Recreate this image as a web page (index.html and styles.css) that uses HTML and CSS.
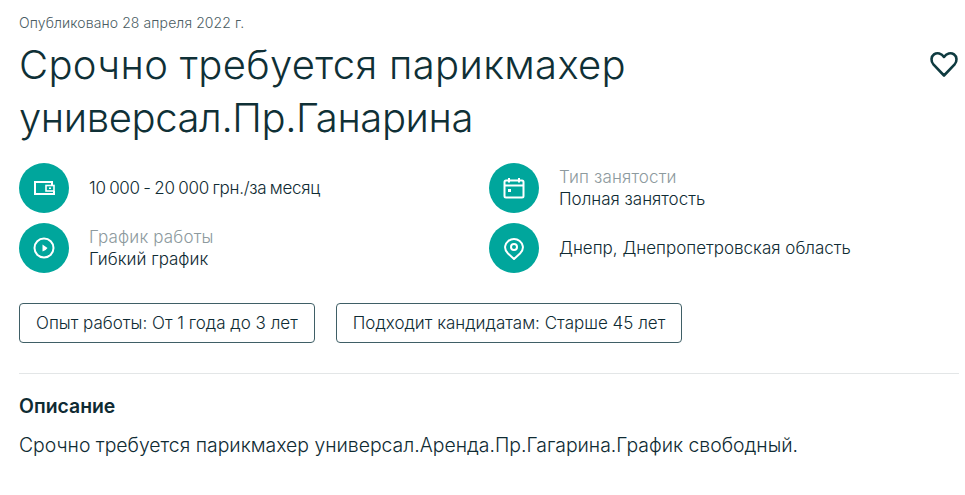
FILE: index.html
```html
<!DOCTYPE html>
<html lang="ru">
<head>
    <meta charset="UTF-8">
    <title>Срочно требуется парикмахер</title>
    <link rel="stylesheet" href="styles.css">
</head>
<body>
    <div class="vacancy">
        <div class="published">Опубликовано 28 апреля 2022 г.</div>
        <div class="title-row">
            <h1>
                <span class="title-first">Срочно требуется парикмахер</span>
                <span class="title-second">универсал.Пр.Ганарина</span>
            </h1>
            <svg class="heart" width="30" height="30" viewBox="0 0 30 30" fill="none" stroke="#0f3b40" stroke-width="2.6" stroke-linejoin="round">
                <path d="M15 26.5 L4.6 15.6 C1.5 12.2 2 7.6 5 5.4 C8.2 3.1 12.5 4.2 15 7.9 C17.5 4.2 21.8 3.1 25 5.4 C28 7.6 28.5 12.2 25.4 15.6 Z"/>
            </svg>
        </div>

        <div class="info-grid">
            <div class="info-item">
                <div class="info-icon">
                    <svg width="24" height="24" viewBox="0 0 24 24" fill="none" stroke="#fff" stroke-width="2">
                        <path d="M20 9.5 V6 H3 V18 H22 V15"/>
                        <rect x="14" y="9.5" width="8" height="5.5" stroke-width="1.6"/>
                        <path d="M17 11.5 H19 V13 H17 Z" fill="#fff" stroke="none"/>
                    </svg>
                </div>
                <div class="info-text">
                    <div class="info-value salary">10 000 - 20 000 грн./за месяц</div>
                </div>
            </div>
            <div class="info-item">
                <div class="info-icon">
                    <svg width="24" height="24" viewBox="0 0 24 24" fill="none" stroke="#fff" stroke-width="2">
                        <rect x="2.5" y="4.5" width="19" height="17" rx="1.5"/>
                        <path d="M2.5 9.5 H21.5 M7 2 V6.5 M17 2 V6.5"/>
                        <path d="M6 13 H9 V16 H6 Z" fill="#fff" stroke="none"/>
                    </svg>
                </div>
                <div class="info-text">
                    <div class="info-label">Тип занятости</div>
                    <div class="info-value">Полная занятость</div>
                </div>
            </div>
            <div class="info-item">
                <div class="info-icon">
                    <svg width="24" height="24" viewBox="0 0 24 24" fill="none" stroke="#fff" stroke-width="2">
                        <circle cx="12" cy="12" r="9.5"/>
                        <path d="M10.5 8.5 L15.5 12 Q13.5 15 10.5 15.5 Z" fill="#fff" stroke="none"/>
                    </svg>
                </div>
                <div class="info-text">
                    <div class="info-label">График работы</div>
                    <div class="info-value">Гибкий график</div>
                </div>
            </div>
            <div class="info-item">
                <div class="info-icon">
                    <svg width="24" height="24" viewBox="0 0 24 24" fill="none" stroke="#fff" stroke-width="2">
                        <path d="M12 23 L6 17.5 C3.5 15 2.8 12.5 3.2 10.2 C4 5.9 7.8 3 12 3 C16.2 3 20 5.9 20.8 10.2 C21.2 12.5 20.5 15 18 17.5 Z" stroke-linejoin="round"/>
                        <circle cx="12" cy="11" r="3"/>
                    </svg>
                </div>
                <div class="info-text">
                    <div class="info-value">Днепр, Днепропетровская область</div>
                </div>
            </div>
        </div>

        <div class="tags">
            <div class="tag">Опыт работы: От 1 года до 3 лет</div>
            <div class="tag">Подходит кандидатам: Старше 45 лет</div>
        </div>

        <div class="description">
            <h2>Описание</h2>
            <p>Срочно требуется парикмахер универсал.Аренда.Пр.Гагарина.График свободный.</p>
        </div>
    </div>
</body>
</html>
```

FILE: styles.css
```css
body {
    margin: 0;
    font-family: Inter, sans-serif;
    font-weight: 300;
    color: #0f2b33;
    background-color: #fff;
}

.vacancy {
    padding: 14px 6px 0 19px;
}

.published {
    font-size: 14px;
    line-height: 18px;
    letter-spacing: 0.1px;
    color: #4a5c62;
}

.title-row {
    display: flex;
    justify-content: space-between;
    align-items: flex-start;
    margin-top: 6px;
}

h1 {
    margin: 0;
    width: 700px;
    font-size: 40px;
    line-height: 53px;
    font-weight: 300;
    color: #0f3036;
}

.title-first,
.title-second {
    display: block;
}

.title-first {
    letter-spacing: 0.33px;
}

.title-second {
    letter-spacing: -0.4px;
}

.heart {
    margin-top: 11px;
}

.info-grid {
    display: grid;
    grid-template-columns: 470px 1fr;
    row-gap: 10px;
    margin-top: 19px;
}

.info-item {
    display: flex;
    align-items: center;
    gap: 20px;
}

.info-icon {
    width: 50px;
    height: 50px;
    border-radius: 50%;
    background-color: #00a69c;
    display: flex;
    align-items: center;
    justify-content: center;
}

.info-label {
    font-size: 17px;
    line-height: 22px;
    letter-spacing: 0.15px;
    color: #8d9a9e;
}

.info-value {
    font-size: 17px;
    line-height: 22px;
}

.salary {
    letter-spacing: -0.3px;
    word-spacing: -0.9px;
}

.tags {
    display: flex;
    gap: 21px;
    margin-top: 30px;
}

.tag {
    border: 1px solid #3f5f66;
    border-radius: 4px;
    padding: 0 16px;
    height: 38px;
    line-height: 38px;
    font-size: 17px;
}

.description {
    margin-top: 30px;
    padding-top: 20px;
    border-top: 1px solid #e3e6e7;
}

h2 {
    margin: 0;
    font-size: 19.4px;
    line-height: 24px;
    font-weight: 600;
}

.description p {
    margin: 15px 0 0;
    font-size: 19.4px;
    line-height: 24px;
}
```
